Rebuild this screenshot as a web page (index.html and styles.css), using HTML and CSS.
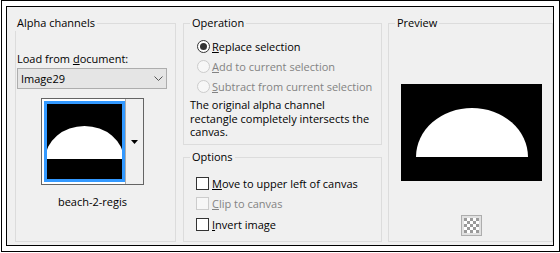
FILE: index.html
```html
<!DOCTYPE html>
<html>
<head>
<meta charset="utf-8">
<link rel="stylesheet" href="styles.css">
</head>
<body>
<div class="frame">
  <div class="dialog">
    <fieldset class="group alpha">
      <legend>Alpha channels</legend>
      <div class="label">Load from <u>d</u>ocument:</div>
      <div class="combo">
        <span>Image29</span>
        <svg class="chev" width="9" height="5" viewBox="0 0 9 5"><polyline points="0.5,0.5 4.5,4.5 8.5,0.5" fill="none" stroke="#555" stroke-width="1"/></svg>
      </div>
      <div class="thumbwrap">
        <div class="thumb">
          <div class="thumbimg">
            <div class="sel">
              <svg width="75" height="75" viewBox="0 0 75 75"><rect width="75" height="75" fill="#000"/><path d="M -1.5 55 A 39 33 0 0 1 76.5 55 Z" fill="#fff"/></svg>
            </div>
          </div>
          <div class="thumbbtn">
            <svg width="7" height="4" viewBox="0 0 7 4"><polygon points="0,0 7,0 3.5,4" fill="#000"/></svg>
          </div>
        </div>
        <div class="caption">beach-2-regis</div>
      </div>
    </fieldset>

    <div class="col2">
      <fieldset class="group op">
        <legend>Operation</legend>
        <div class="opts">
          <div class="opt"><span class="radio on"></span><span><u>R</u>eplace selection</span></div>
          <div class="opt dis"><span class="radio"></span><span><u>A</u>dd to current selection</span></div>
          <div class="opt dis"><span class="radio"></span><span><u>S</u>ubtract from current selection</span></div>
        </div>
        <p class="info">The original alpha channel<br>rectangle completely intersects the<br>canvas.</p>
      </fieldset>
      <fieldset class="group options">
        <legend>Options</legend>
        <div class="checks">
          <div class="opt"><span class="cb"></span><span><u>M</u>ove to upper left of canvas</span></div>
          <div class="opt dis"><span class="cb"></span><span><u>C</u>lip to canvas</span></div>
          <div class="opt"><span class="cb"></span><span><u>I</u>nvert image</span></div>
        </div>
      </fieldset>
    </div>

    <fieldset class="group preview">
      <legend>Preview</legend>
      <svg class="pv" width="141" height="97" viewBox="0 0 141 97"><rect width="141" height="97" fill="#000"/><path d="M 15 73 A 56 49 0 0 1 127 73 Z" fill="#fff"/></svg>
      <div class="checker">
        <svg width="15" height="15" viewBox="0 0 15 15">
          <rect width="15" height="15" fill="#fff"/>
          <g fill="#9a9a9a">
            <rect x="0" y="0" width="3" height="3"/><rect x="6" y="0" width="3" height="3"/><rect x="12" y="0" width="3" height="3"/>
            <rect x="3" y="3" width="3" height="3"/><rect x="9" y="3" width="3" height="3"/>
            <rect x="0" y="6" width="3" height="3"/><rect x="6" y="6" width="3" height="3"/><rect x="12" y="6" width="3" height="3"/>
            <rect x="3" y="9" width="3" height="3"/><rect x="9" y="9" width="3" height="3"/>
            <rect x="0" y="12" width="3" height="3"/><rect x="6" y="12" width="3" height="3"/><rect x="12" y="12" width="3" height="3"/>
          </g>
        </svg>
      </div>
    </fieldset>
  </div>
</div>
</body>
</html>
```

FILE: styles.css
```css
* { box-sizing: border-box; }
body {
  margin: 0;
  background: #fff;
  font-family: "Open Sans", "Noto Sans", sans-serif;
  font-size: 11px;
  color: #000;
}
.frame {
  margin-left: 1px;
  width: 559px;
  height: 252px;
  border: 1px solid #000;
  padding: 5px 5px 5px 4px;
}
.dialog {
  width: 548px;
  height: 240px;
  border: 1px solid #000;
  background: #f0f0f0;
  display: flex;
  align-items: flex-start;
  padding: 8px 0 0 8px;
}
.group {
  margin: 0;
  padding: 0;
  border: 1px solid #dcdcdc;
  min-width: 0;
}
.group legend {
  padding: 0 2px;
  margin-left: 6px;
  line-height: 16px;
  height: 16px;
}
.alpha { width: 161px; height: 227px; padding-left: 1px; }
.alpha legend { margin-left: -2px; }
.label { margin-top: 20px; line-height: 15px; }
.combo {
  margin-top: 2px;
  width: 150px;
  height: 21px;
  border: 1px solid #adadad;
  background: #e5e5e5;
  display: flex;
  align-items: center;
  justify-content: space-between;
  padding: 0 3px 0 3px;
  line-height: 15px;
}
.chev { display: block; }
.thumbwrap { margin: 9px 0 0 24px; width: 103px; }
.thumb {
  display: flex;
  height: 87px;
  border: 1px solid #646464;
  background: #fff;
}
.thumbimg { padding: 2px 0 2px 2px; }
.sel { border: 3px solid #3399ff; }
.sel svg { display: block; }
.thumbbtn {
  width: 18px;
  border-left: 1px solid #adadad;
  background: #f0f0f0;
  display: flex;
  align-items: center;
  justify-content: center;
}
.thumbbtn svg { display: block; }
.caption { margin-top: 9px; text-align: center; line-height: 15px; }

.col2 { margin-left: 7px; width: 199px; display: flex; flex-direction: column; }
.op { height: 130px; padding-left: 6px; }
.op legend, .options legend { margin-left: 0; }
.opts { margin: 5px 0 0 7px; }
.opt { display: flex; align-items: center; height: 20px; line-height: 15px; }
.opt.dis { color: #838383; }
.radio {
  width: 13px; height: 13px;
  border: 1px solid #333;
  border-radius: 50%;
  background: #fff;
  margin-right: 2px;
  display: flex; align-items: center; justify-content: center;
  flex: none;
}
.radio.on::after {
  content: "";
  width: 7px; height: 7px;
  border-radius: 50%;
  background: #333;
}
.dis .radio, .dis .cb { border-color: #cccccc; background: #f7f7f7; }
.info { margin: 2px 0 0 0; line-height: 13.5px; }
.options { margin-top: 4px; height: 93px; padding-left: 6px; }
.checks { margin: 8px 0 0 6px; }
.checks .opt { height: 20.5px; }
.cb {
  width: 13px; height: 13px;
  border: 1px solid #333;
  background: #fff;
  margin-right: 3px;
  flex: none;
}

.preview { margin-left: 6px; width: 165px; height: 227px; }
.pv { display: block; margin: 53px 0 0 12px; }
.checker {
  margin: 34px 0 0 72px;
  width: 21px; height: 21px;
  border: 1px solid #adadad;
  background: #e1e1e1;
  display: flex; align-items: center; justify-content: center;
}
.checker svg { display: block; }
```
